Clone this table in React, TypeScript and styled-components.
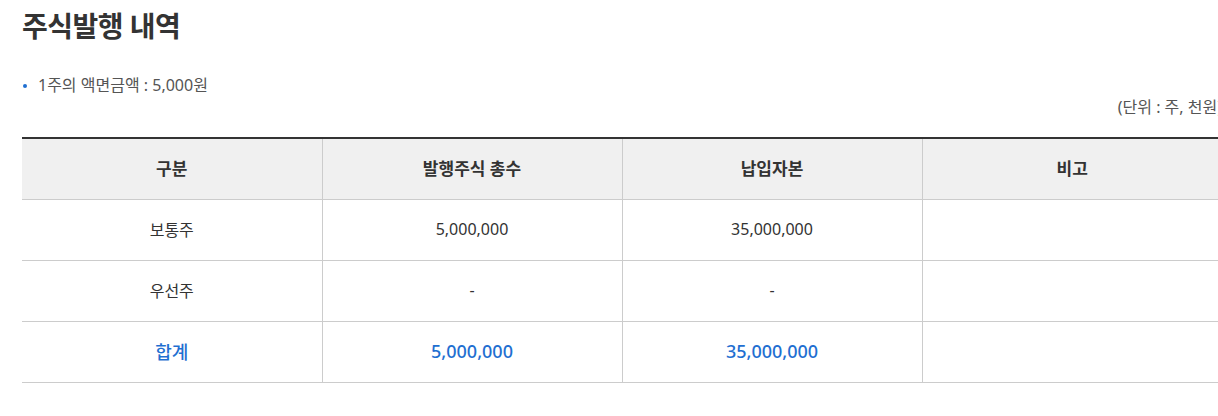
import React from 'react';
import styled, { createGlobalStyle } from 'styled-components';

const GlobalStyle = createGlobalStyle`
  body {
    margin: 0;
    background: #fff;
    font-family: "Noto Sans", "Noto Sans CJK KR", sans-serif;
    color: #333;
  }
`;

const Wrap = styled.div`
  width: 1200px;
  padding: 6px 0 0 22px;
`;

const Title = styled.h2`
  margin: 0;
  font-size: 28px;
  font-weight: 700;
  line-height: 40px;
  color: #333;
  letter-spacing: -0.5px;
`;

const InfoList = styled.ul`
  list-style: none;
  margin: 29px 0 0;
  padding: 0;
`;

const InfoItem = styled.li`
  position: relative;
  padding-left: 16px;
  font-size: 16px;
  line-height: 20px;
  color: #555;

  &::before {
    content: '';
    position: absolute;
    left: 1px;
    top: 9px;
    width: 4px;
    height: 4px;
    border-radius: 50%;
    background: #1f6fd1;
  }
`;

const Unit = styled.p`
  margin: 2px 0 0;
  text-align: right;
  font-size: 16px;
  line-height: 20px;
  color: #555;
`;

const Table = styled.table`
  width: 100%;
  margin-top: 20px;
  border-collapse: collapse;
  table-layout: fixed;
  border-top: 2px solid #333;
`;

const Th = styled.th`
  height: 56px;
  padding: 0 0 4px;
  background: #f0f0f0;
  font-size: 17px;
  font-weight: 700;
  color: #333;
  border-bottom: 1px solid #ccc;
  border-left: 1px solid #ccc;
  &:first-child { border-left: none; }
`;

const Td = styled.td<{ $total?: boolean }>`
  height: 58px;
  padding: 0 0 2px;
  text-align: center;
  font-size: ${(p) => (p.$total ? '18px' : '16px')};
  font-weight: ${(p) => (p.$total ? 500 : 400)};
  color: ${(p) => (p.$total ? '#1f6fd1' : '#333')};
  border-bottom: 1px solid #ccc;
  border-left: 1px solid #ccc;
  &:first-child { border-left: none; }
`;

const rows = [
  { name: '보통주', shares: '5,000,000', capital: '35,000,000', note: '' },
  { name: '우선주', shares: '-', capital: '-', note: '' },
  { name: '합계', shares: '5,000,000', capital: '35,000,000', note: '', total: true },
];

const App = () => (
  <>
    <GlobalStyle />
    <Wrap>
      <Title>주식발행 내역</Title>
      <InfoList>
        <InfoItem>1주의 액면금액 : 5,000원</InfoItem>
      </InfoList>
      <Unit>(단위 : 주, 천원)</Unit>
      <Table>
        <thead>
          <tr>
            <Th>구분</Th>
            <Th>발행주식 총수</Th>
            <Th>납입자본</Th>
            <Th>비고</Th>
          </tr>
        </thead>
        <tbody>
          {rows.map((r) => (
            <tr key={r.name}>
              <Td $total={r.total}>{r.name}</Td>
              <Td $total={r.total}>{r.shares}</Td>
              <Td $total={r.total}>{r.capital}</Td>
              <Td $total={r.total}>{r.note}</Td>
            </tr>
          ))}
        </tbody>
      </Table>
    </Wrap>
  </>
);

export default App;
